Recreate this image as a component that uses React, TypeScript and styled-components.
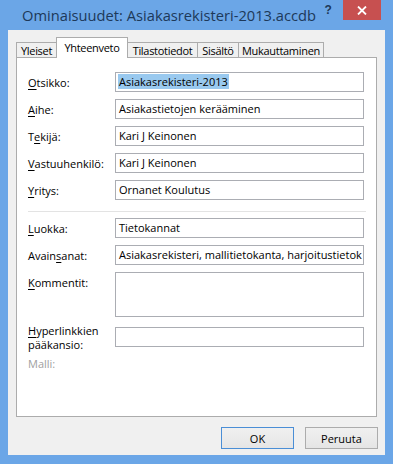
import React from 'react'
import styled, { createGlobalStyle } from 'styled-components'

const FONT = `'Open Sans', 'Noto Sans', 'DejaVu Sans', sans-serif`

const GlobalStyle = createGlobalStyle`
  html, body {
    margin: 0;
    padding: 0;
    background: #ffffff;
  }
  body {
    font-family: ${FONT};
    font-size: 11px;
    color: #000000;
  }
`

type Field = {
  label: React.ReactNode
  value?: string
  selected?: boolean
  tall?: boolean
  twoLine?: boolean
}

const Key: React.FC<{ children: React.ReactNode }> = ({ children }) => (
  <AccessKey>{children}</AccessKey>
)

const topFields: Field[] = [
  { label: <><Key>O</Key>tsikko:</>, value: 'Asiakasrekisteri-2013', selected: true },
  { label: <><Key>A</Key>ihe:</>, value: 'Asiakastietojen kerääminen' },
  { label: <>T<Key>e</Key>kijä:</>, value: 'Kari J Keinonen' },
  { label: <><Key>V</Key>astuuhenkilö:</>, value: 'Kari J Keinonen' },
  { label: <><Key>Y</Key>ritys:</>, value: 'Ornanet Koulutus' },
]

const bottomFields: Field[] = [
  { label: <><Key>L</Key>uokka:</>, value: 'Tietokannat' },
  {
    label: <>Avain<Key>s</Key>anat:</>,
    value: 'Asiakasrekisteri, mallitietokanta, harjoitustietok',
  },
  { label: <><Key>K</Key>ommentit:</>, tall: true },
  { label: <><Key>H</Key>yperlinkkien<br />pääkansio:</>, twoLine: true },
]

// tab label + width in px
const tabs: [string, number][] = [
  ['Yleiset', 41],
  ['Yhteenveto', 72],
  ['Tilastotiedot', 70],
  ['Sisältö', 41],
  ['Mukauttaminen', 85],
]

const FieldRow: React.FC<Field> = (props) => (
  <>
    <Label tall={props.tall} twoLine={props.twoLine}>
      {props.label}
    </Label>
    <Input tall={props.tall}>
      {props.value && (
        <InputText selected={props.selected}>{props.value}</InputText>
      )}
    </Input>
  </>
)

const App: React.FC = () => {
  return (
    <>
      <GlobalStyle />
      <Window>
        <TitleBar>
          <Title>Ominaisuudet: Asiakasrekisteri-2013.accdb</Title>
          <HelpButton>?</HelpButton>
          <CloseButton>
            <svg width="10" height="9" viewBox="0 0 10 9">
              <path
                d="M1 0.5 L9 8.5 M9 0.5 L1 8.5"
                stroke="#ffffff"
                strokeWidth="1.8"
                fill="none"
              />
            </svg>
          </CloseButton>
        </TitleBar>
        <Client>
          <TabStrip>
            {tabs.map(([t, w], i) => (
              <Tab key={t} active={i === 1} width={w}>
                {t}
              </Tab>
            ))}
          </TabStrip>
          <Panel>
            <Form>
              {topFields.map((f, i) => (
                <FieldRow key={i} {...f} />
              ))}
              <Separator />
              {bottomFields.map((f, i) => (
                <FieldRow key={i} {...f} />
              ))}
              <DisabledLabel>Malli:</DisabledLabel>
            </Form>
          </Panel>
          <ButtonRow>
            <Button primary>OK</Button>
            <Button>Peruuta</Button>
          </ButtonRow>
        </Client>
      </Window>
    </>
  )
}

const Window = styled.div`
  width: 393px;
  height: 464px;
  background: #6ba6e7;
  display: flex;
  flex-direction: column;
  box-sizing: border-box;
`
const TitleBar = styled.div`
  height: 30px;
  display: flex;
  align-items: flex-start;
  padding-left: 22px;
  flex-shrink: 0;
`
const Title = styled.div`
  flex: 1;
  padding-top: 5px;
  font-size: 14.7px;
  color: #1d3959;
  white-space: nowrap;
`
const HelpButton = styled.div`
  width: 26px;
  height: 20px;
  display: flex;
  align-items: center;
  justify-content: center;
  font-family: 'Liberation Sans', Arial, sans-serif;
  font-weight: bold;
  font-size: 12px;
  color: #1d3959;
  margin-right: 3px;
`
const CloseButton = styled.div`
  width: 40px;
  height: 20px;
  background: #c75050;
  display: flex;
  align-items: center;
  justify-content: center;
  margin-right: 12px;
`
const Client = styled.div`
  flex: 1;
  margin: 0 8px 9px 8px;
  background: #f0f0f0;
  padding: 8px 8px 6px 8px;
  display: flex;
  flex-direction: column;
`
const TabStrip = styled.div`
  display: flex;
  align-items: flex-end;
  height: 20px;
  position: relative;
  z-index: 1;
`
const Tab = styled.div<{ active?: boolean; width: number }>`
  box-sizing: border-box;
  width: ${({ width }) => width}px;
  height: ${({ active }) => (active ? '21px' : '16px')};
  padding-top: ${({ active }) => (active ? '3px' : '1px')};
  margin-left: ${({ active }) => (active ? '-1px' : '0')};
  border: 1px solid #acacac;
  border-bottom: ${({ active }) => (active ? 'none' : '1px solid #acacac')};
  border-left: ${({ active }) => (active ? '1px solid #acacac' : 'none')};
  background: ${({ active }) => (active ? '#ffffff' : '#f0f0f0')};
  position: relative;
  z-index: ${({ active }) => (active ? 2 : 1)};
  display: flex;
  justify-content: center;
  line-height: 13px;
  letter-spacing: -0.3px;
  white-space: nowrap;

  &:first-child {
    border-left: 1px solid #acacac;
  }
`
const Panel = styled.div`
  flex: 1;
  background: #ffffff;
  border: 1px solid #acacac;
  margin-top: -1px;
  padding: 14px 12px 0 11px;
`
const Form = styled.div`
  display: grid;
  grid-template-columns: 87px 249px;
  row-gap: 7px;
  align-items: start;
`
const Label = styled.div<{ tall?: boolean; twoLine?: boolean }>`
  line-height: ${({ twoLine }) => (twoLine ? '14px' : '15px')};
  padding-top: ${({ twoLine }) => (twoLine ? '0' : '3px')};
  margin-top: ${({ twoLine }) => (twoLine ? '-3px' : '0')};
  margin-bottom: ${({ tall }) => (tall ? '3px' : '0')};
  white-space: nowrap;
`
const AccessKey = styled.span`
  text-decoration: underline;
  text-underline-offset: 2px;
`
const Input = styled.div<{ tall?: boolean }>`
  box-sizing: border-box;
  height: ${({ tall }) => (tall ? '45px' : '20px')};
  margin-bottom: ${({ tall }) => (tall ? '3px' : '0')};
  border: 1px solid #abadb3;
  background: #ffffff;
  padding: 2px 0 0 2px;
  overflow: hidden;
  white-space: nowrap;
  line-height: 14px;
`
const InputText = styled.span<{ selected?: boolean }>`
  background: ${({ selected }) => (selected ? '#99c9ef' : 'transparent')};
  padding: 0 1px;
`
const Separator = styled.div`
  grid-column: 1 / -1;
  height: 1px;
  background: #e3e3e3;
  margin: 4px -2px -1px 0;
`
const DisabledLabel = styled.div`
  grid-column: 1 / -1;
  color: #a0a0a0;
  line-height: 15px;
  margin-top: -3px;
`
const ButtonRow = styled.div`
  display: flex;
  justify-content: flex-end;
  gap: 11px;
  margin-top: 10px;
  margin-right: -1px;
`
const Button = styled.div<{ primary?: boolean }>`
  box-sizing: border-box;
  width: 73px;
  height: 22px;
  display: flex;
  align-items: center;
  justify-content: center;
  border: 1px solid ${({ primary }) => (primary ? '#4a8ed6' : '#acacac')};
  background: linear-gradient(#f0f0f0, #e5e5e5);
`

export default App
